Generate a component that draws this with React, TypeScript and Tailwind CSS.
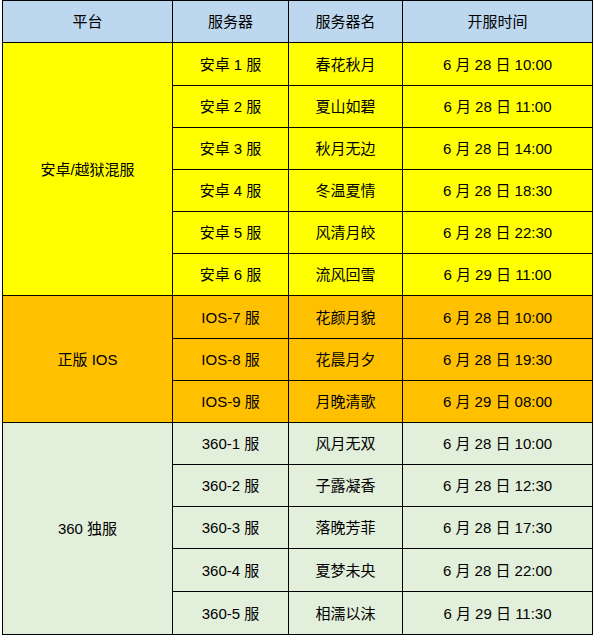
import React from "react";

type Row = { server: string; name: string; time: string; h: number };

const groups: { platform: string; bg: string; rows: Row[] }[] = [
  {
    platform: "安卓/越狱混服",
    bg: "bg-[#ffff00]",
    rows: [
      { server: "安卓 1 服", name: "春花秋月", time: "6 月 28 日 10:00", h: 43 },
      { server: "安卓 2 服", name: "夏山如碧", time: "6 月 28 日 11:00", h: 42 },
      { server: "安卓 3 服", name: "秋月无边", time: "6 月 28 日 14:00", h: 42 },
      { server: "安卓 4 服", name: "冬温夏情", time: "6 月 28 日 18:30", h: 42 },
      { server: "安卓 5 服", name: "风清月皎", time: "6 月 28 日 22:30", h: 42 },
      { server: "安卓 6 服", name: "流风回雪", time: "6 月 29 日 11:00", h: 42 },
    ],
  },
  {
    platform: "正版 IOS",
    bg: "bg-[#ffc000]",
    rows: [
      { server: "IOS-7 服", name: "花颜月貌", time: "6 月 28 日 10:00", h: 43 },
      { server: "IOS-8 服", name: "花晨月夕", time: "6 月 28 日 19:30", h: 42 },
      { server: "IOS-9 服", name: "月晚清歌", time: "6 月 29 日 08:00", h: 42 },
    ],
  },
  {
    platform: "360 独服",
    bg: "bg-[#e2efda]",
    rows: [
      { server: "360-1 服", name: "风月无双", time: "6 月 28 日 10:00", h: 42 },
      { server: "360-2 服", name: "子露凝香", time: "6 月 28 日 12:30", h: 42 },
      { server: "360-3 服", name: "落晚芳菲", time: "6 月 28 日 17:30", h: 42 },
      { server: "360-4 服", name: "夏梦未央", time: "6 月 28 日 22:00", h: 43 },
      { server: "360-5 服", name: "相濡以沫", time: "6 月 29 日 11:30", h: 43 },
    ],
  },
];

const cell = "border border-black text-center align-middle p-0";

export default function App() {
  return (
    <div
      className="w-[595px] h-[637px] bg-white pl-[2px] text-[15px] text-black"
      style={{ fontFamily: '"Liberation Sans", "Noto Sans CJK SC", sans-serif' }}
    >
      <table className="border-collapse w-[591px] table-fixed leading-none">
        <colgroup>
          <col className="w-[170px]" />
          <col className="w-[116px]" />
          <col className="w-[114px]" />
          <col className="w-[190px]" />
        </colgroup>
        <thead>
          <tr className="h-[42px] bg-[#bdd7ee]">
            <th className={`${cell} font-normal`}>平台</th>
            <th className={`${cell} font-normal`}>服务器</th>
            <th className={`${cell} font-normal`}>服务器名</th>
            <th className={`${cell} font-normal`}>开服时间</th>
          </tr>
        </thead>
        <tbody>
          {groups.map((g) =>
            g.rows.map((r, i) => (
              <tr key={r.server} className={g.bg} style={{ height: r.h }}>
                {i === 0 && (
                  <td className={cell} rowSpan={g.rows.length}>
                    {g.platform}
                  </td>
                )}
                <td className={cell}>{r.server}</td>
                <td className={cell}>{r.name}</td>
                <td className={cell}>{r.time}</td>
              </tr>
            ))
          )}
        </tbody>
      </table>
    </div>
  );
}
